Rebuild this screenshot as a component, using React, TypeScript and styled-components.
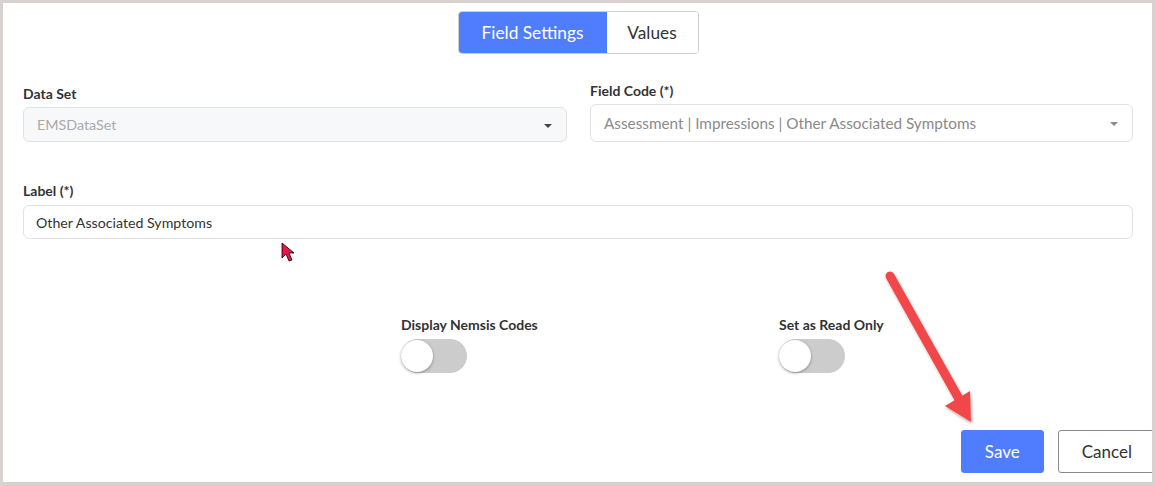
import styled, { createGlobalStyle } from 'styled-components';

const GlobalStyle = createGlobalStyle`
  html, body {
    margin: 0;
    padding: 0;
    background: #ffffff;
  }
  * {
    box-sizing: border-box;
  }
`;

const Frame = styled.div`
  position: relative;
  width: 1156px;
  height: 486px;
  border-style: solid;
  border-color: #d9d1cf;
  border-width: 3px 4px 4px 3px;
  background: #ffffff;
  overflow: hidden;
  font-family: Lato, "Open Sans", sans-serif;
  color: #333333;
  padding: 8px 19px 0 20px;
`;

const TabBar = styled.div`
  display: flex;
  justify-content: center;
  margin-bottom: 29px;
`;

const TabGroup = styled.div`
  display: flex;
  border: 1px solid #cfcfcf;
  border-radius: 4px;
  overflow: hidden;
`;

const Tab = styled.div<{ $active?: boolean; $width: number }>`
  width: ${(p) => p.$width}px;
  height: 41px;
  display: flex;
  align-items: center;
  justify-content: center;
  font-size: 17.3px;
  background: ${(p) => (p.$active ? '#4f7dfd' : '#ffffff')};
  color: ${(p) => (p.$active ? '#ffffff' : '#333333')};
`;

const Row = styled.div`
  display: grid;
  grid-template-columns: 544px 543px;
  column-gap: 23px;
  align-items: end;
`;

const Field = styled.div`
  display: flex;
  flex-direction: column;
`;

const Label = styled.div<{ $gap?: number }>`
  font-size: 14px;
  font-weight: 700;
  line-height: 16px;
  color: #333333;
  margin-bottom: ${(p) => p.$gap ?? 5}px;
`;

const SelectBox = styled.div<{ $disabled?: boolean; $height: number }>`
  height: ${(p) => p.$height}px;
  border: 1px solid #e2e2e2;
  border-radius: 6px;
  background: ${(p) => (p.$disabled ? '#f7f8f9' : '#ffffff')};
  display: flex;
  align-items: center;
  justify-content: space-between;
  padding: 0 14px 0 13px;
  font-size: ${(p) => (p.$disabled ? 14.3 : 15.3)}px;
  color: ${(p) => (p.$disabled ? '#a9a9a9' : '#8a8a8a')};
`;

const Caret = styled.span<{ $color: string }>`
  width: 0;
  height: 0;
  border-left: 4px solid transparent;
  border-right: 4px solid transparent;
  border-top: 4px solid ${(p) => p.$color};
  margin-top: 2px;
`;

const LabelField = styled(Field)`
  margin-top: 41px;
`;

const TextInput = styled.div`
  height: 34px;
  border: 1px solid #e2e2e2;
  border-radius: 6px;
  display: flex;
  align-items: center;
  padding: 0 12px;
  font-size: 14.2px;
  color: #333333;
`;

const ToggleRow = styled.div`
  display: grid;
  grid-template-columns: 378px 378px;
  padding-left: 378px;
  margin-top: 78px;
`;

const ToggleItem = styled.div`
  display: flex;
  flex-direction: column;
`;

const Switch = styled.div`
  position: relative;
  width: 66px;
  height: 34px;
  border-radius: 17px;
  background: #cccccc;
`;

const Knob = styled.div`
  position: absolute;
  left: 0;
  top: 1px;
  width: 32px;
  height: 32px;
  border-radius: 50%;
  background: #ffffff;
  box-shadow: 0 1px 3px rgba(0, 0, 0, 0.35);
`;

const ButtonRow = styled.div`
  display: flex;
  justify-content: flex-end;
  gap: 14px;
  margin-top: 57px;
  margin-right: -23px;
`;

const Button = styled.div<{ $primary?: boolean }>`
  height: 43px;
  padding: 0 23px;
  display: flex;
  align-items: center;
  border-radius: 3px;
  font-size: 17px;
  background: ${(p) => (p.$primary ? '#4f7dfd' : '#ffffff')};
  color: ${(p) => (p.$primary ? '#ffffff' : '#333333')};
  border: 1px solid ${(p) => (p.$primary ? '#4f7dfd' : '#8a8a8a')};
`;

const Annotation = styled.svg`
  position: absolute;
  left: 876px;
  top: 262px;
  pointer-events: none;
`;

const Cursor = styled.svg`
  position: absolute;
  left: 276px;
  top: 238px;
  pointer-events: none;
`;

const App = () => {
  return (
    <>
      <GlobalStyle />
      <Frame>
        <TabBar>
          <TabGroup>
            <Tab $active $width={148}>Field Settings</Tab>
            <Tab $width={91}>Values</Tab>
          </TabGroup>
        </TabBar>

        <Row>
          <Field>
            <Label>Data Set</Label>
            <SelectBox $disabled $height={35}>
              EMSDataSet
              <Caret $color="#444444" />
            </SelectBox>
          </Field>
          <Field>
            <Label>Field Code (*)</Label>
            <SelectBox $height={38}>
              Assessment | Impressions | Other Associated Symptoms
              <Caret $color="#8a8a8a" />
            </SelectBox>
          </Field>
        </Row>

        <LabelField>
          <Label $gap={6}>Label (*)</Label>
          <TextInput>Other Associated Symptoms</TextInput>
        </LabelField>

        <ToggleRow>
          <ToggleItem>
            <Label $gap={6}>Display Nemsis Codes</Label>
            <Switch>
              <Knob />
            </Switch>
          </ToggleItem>
          <ToggleItem>
            <Label $gap={6}>Set as Read Only</Label>
            <Switch>
              <Knob />
            </Switch>
          </ToggleItem>
        </ToggleRow>

        <ButtonRow>
          <Button $primary>Save</Button>
          <Button>Cancel</Button>
        </ButtonRow>

        <Annotation width="110" height="170" viewBox="0 0 110 170">
          <defs>
            <filter id="sh" x="-30%" y="-30%" width="160%" height="160%">
              <feDropShadow dx="1" dy="2" stdDeviation="1.5" floodColor="#000" floodOpacity="0.3" />
            </filter>
          </defs>
          <g filter="url(#sh)">
            <line x1="11" y1="11" x2="80" y2="134" stroke="#f2464a" strokeWidth="9" strokeLinecap="round" />
            <polygon points="92,157 66,141 91,126" fill="#f2464a" />
          </g>
        </Annotation>

        <Cursor width="18" height="24" viewBox="0 0 18 24">
          <path d="M3 2 L3 17 L7 13 L10 20 L13 19 L10 12 L15 12 Z" fill="#e8174a" stroke="#000" strokeWidth="0.8" />
        </Cursor>
      </Frame>
    </>
  );
};

export default App;
